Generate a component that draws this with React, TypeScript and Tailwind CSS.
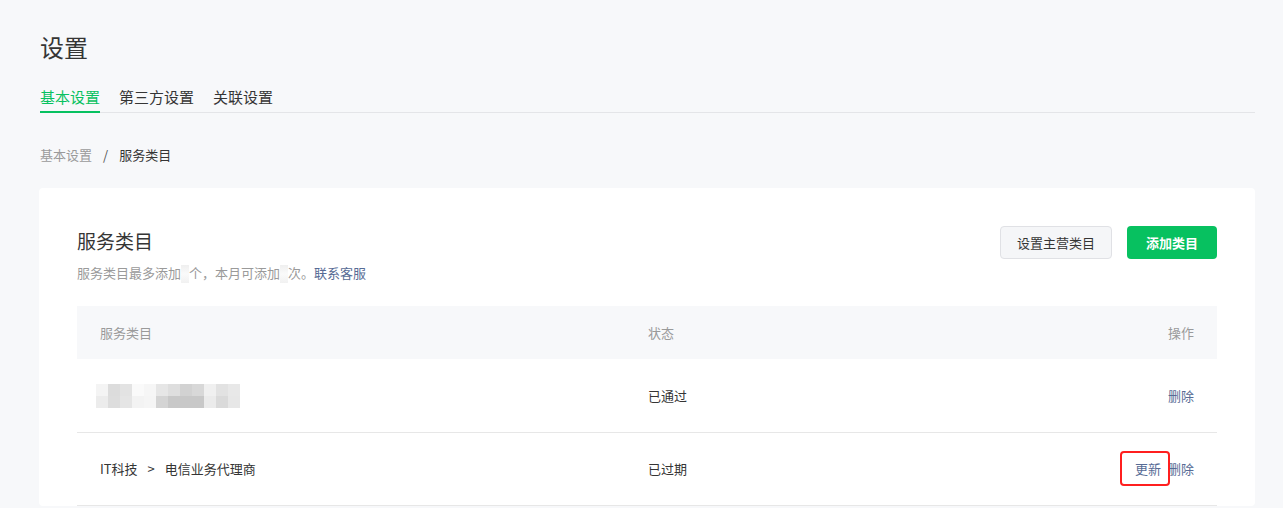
const mosaicTop = ["#f4f4f4", "#dcdcdc", "#e3e3e3", "#fafafa", "#f6f6f6", "#e6e6e6", "#dedede", "#d2d2d2", "#d8d8d8", "#f0f0f0", "#e2e2e2", "#e8e8e8"];
const mosaicBottom = ["#ececec", "#dddddd", "#e5e5e5", "#f3f3f3", "#f5f5f5", "#d4d4d4", "#c8c8c8", "#c8c8c8", "#c8c8c8", "#ebebeb", "#dadada", "#e7e7e7"];

function Mosaic() {
  return (
    <div className="flex flex-col">
      {[mosaicTop, mosaicBottom].map((row, i) => (
        <div key={i} className="flex">
          {row.map((c, j) => (
            <span key={j} className="block w-[12px] h-[12px]" style={{ backgroundColor: c }} />
          ))}
        </div>
      ))}
    </div>
  );
}

function Blur() {
  return <span className="inline-block w-[8px] h-[18px] align-middle bg-gradient-to-b from-[#efefef] via-[#fafafa] to-[#f1f1f1]" />;
}

export default function App() {
  const tabs = ["基本设置", "第三方设置", "关联设置"];

  return (
    <div className="min-h-screen bg-[#f7f8fa] pl-[40px] pr-[28px] pt-[31px] font-['Noto_Sans_CJK_SC',sans-serif] text-[#353535]">
      <h1 className="text-[24px] leading-[32px] text-[#353535]">设置</h1>

      <div className="mt-[23px] flex gap-[19px] border-b border-[#e4e5e8]">
        {tabs.map((t, i) => (
          <div
            key={t}
            className={
              i === 0
                ? "-mb-px pb-[3px] border-b-2 border-[#07c160] text-[15px] leading-[22px] text-[#07c160]"
                : "-mb-px pb-[3px] border-b-2 border-transparent text-[15px] leading-[22px] text-[#353535]"
            }
          >
            {t}
          </div>
        ))}
      </div>

      <div className="mt-[32px] flex items-center text-[13px] leading-[20px]">
        <span className="text-[#9a9a9a]">基本设置</span>
        <span className="mx-[11px] text-[#555]">/</span>
        <span className="text-[#353535]">服务类目</span>
      </div>

      <div className="mt-[23px] -ml-px bg-white rounded-[4px] px-[38px] pt-[38px]">
        <div className="flex items-start justify-between">
          <div>
            <h2 className="mt-px text-[19px] leading-[28px] text-[#353535]">服务类目</h2>
            <p className="mt-[8px] text-[13px] leading-[20px] text-[#9a9a9a]">
              服务类目最多添加<Blur />个，本月可添加<Blur />次。
              <a className="text-[#576b95]">联系客服</a>
            </p>
          </div>
          <div className="flex gap-[15px]">
            <button className="h-[33px] px-[16px] rounded-[4px] border border-[#e0e1e5] bg-[#f5f6f8] text-[13px] text-[#353535]">
              设置主营类目
            </button>
            <button className="h-[33px] px-[19px] rounded-[4px] bg-[#07c160] text-[13px] font-bold text-white">
              添加类目
            </button>
          </div>
        </div>

        <div className="mt-[23px] text-[13px] leading-[20px]">
          <div className="grid grid-cols-[548px_1fr_auto] items-center h-[53px] px-[23px] bg-[#f7f8fa] text-[#9a9a9a]">
            <span>服务类目</span>
            <span>状态</span>
            <span>操作</span>
          </div>

          <div className="grid grid-cols-[548px_1fr_auto] items-center h-[74px] pl-[19px] pr-[23px] border-b border-[#e7e7e7]">
            <Mosaic />
            <span className="pl-[4px]">已通过</span>
            <span className="text-[#576b95]">删除</span>
          </div>

          <div className="grid grid-cols-[548px_1fr_auto] items-center h-[73px] px-[23px] border-b border-[#e7e7e7]">
            <span>
              IT科技<span className="mx-[10px]">&gt;</span>电信业务代理商
            </span>
            <span>已过期</span>
            <span className="flex gap-[7px] text-[#576b95]">
              <span className="relative">
                更新
                <span className="absolute -left-[15px] -right-[9px] -top-[8px] -bottom-[7px] rounded-[4px] border-2 border-[#ff1f1f]" />
              </span>
              <span>删除</span>
            </span>
          </div>
        </div>
      </div>
    </div>
  );
}
